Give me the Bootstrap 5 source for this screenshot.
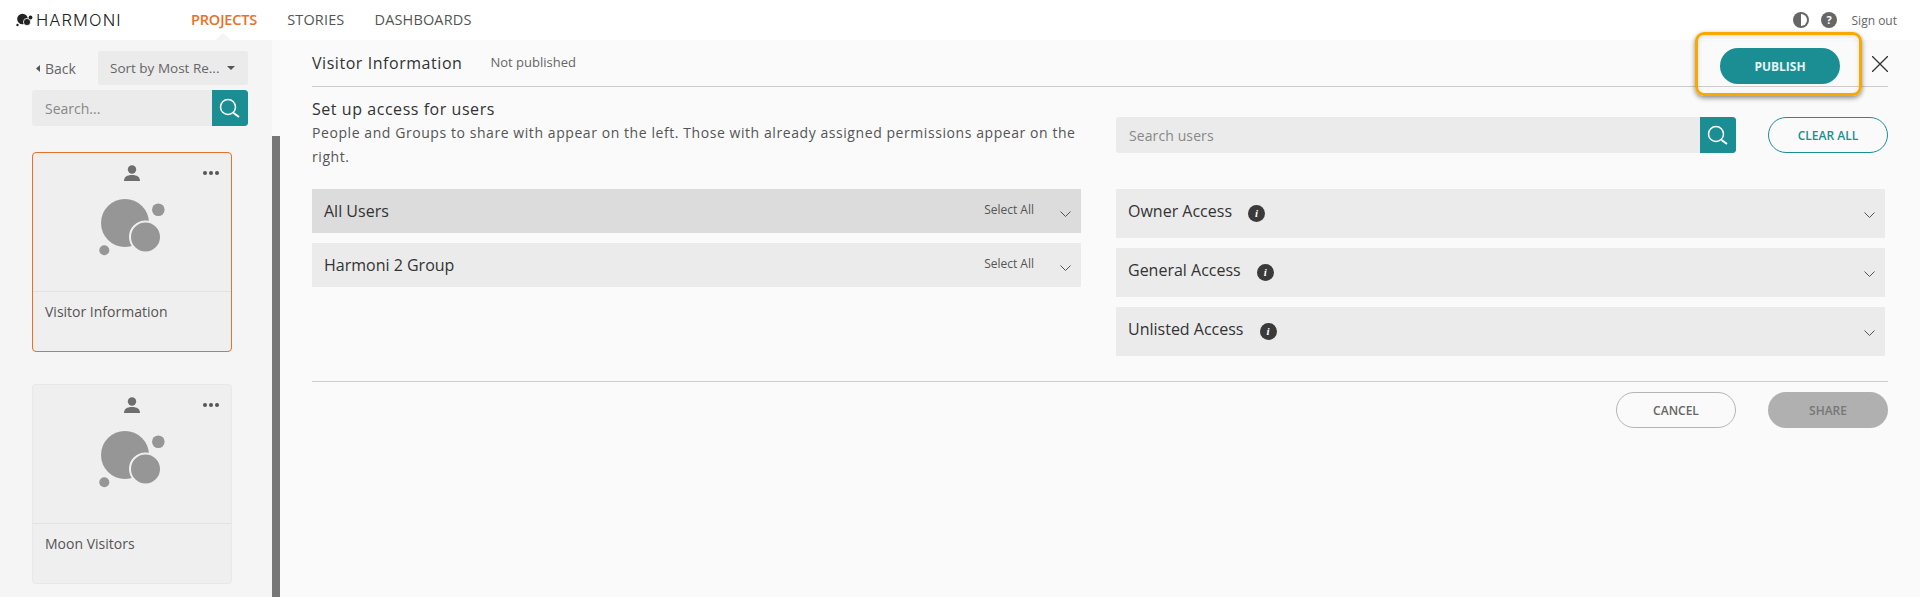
<!DOCTYPE html>
<html lang="en">
<head>
<meta charset="utf-8">
<title>Harmoni</title>
<link href="https://cdn.jsdelivr.net/npm/bootstrap@5.3.0/dist/css/bootstrap.min.css" rel="stylesheet">
<style>
html,body{height:597px;overflow:hidden}
body{font-family:"Open Sans",sans-serif;color:#333;background:#fafafa}
.hm-top{height:40px;background:#fff;position:relative}
.hm-logo{width:191px;padding-left:16px;gap:3px}
.hm-word{font-family:Inter,sans-serif;font-weight:300;font-size:16.5px;color:#222;letter-spacing:1.1px;line-height:20px}
.hm-link{font-size:14.5px;color:#555;font-weight:500;text-decoration:none;margin-right:30px;line-height:40px;letter-spacing:.15px}
.hm-link.on{color:#e8702a;font-weight:600;letter-spacing:-.15px}
.hm-notch{position:absolute;left:215px;top:33px;width:0;height:0;border-left:8px solid transparent;border-right:8px solid transparent;border-bottom:7px solid #f5f5f5}
.hm-util{padding-right:23px;gap:12px;color:#666;font-size:12px}
.hm-util span{margin-left:3px;padding-top:2px}
.hm-body{height:557px}
.hm-side{width:272px;background:#f5f5f5;position:relative;flex:none}
.hm-bar{width:8px;background:#777;margin-top:96px;flex:none}
.hm-sideinner{width:272px;padding:11px 24px 0 32px}
.hm-toprow{margin-bottom:5px}
.hm-back{width:66px;font-size:14px;color:#666;padding-left:4px;gap:5px;padding-top:1px}
.hm-sort{background:#ebebeb;height:34px;width:150px;border-radius:2px;font-size:13.5px;color:#666;padding:0 13px 0 12px;justify-content:space-between}
.hm-sort i{border-left:4px solid transparent;border-right:4px solid transparent;border-top:4px solid #555}
.hm-searchrow{height:36px;border-radius:3px;overflow:hidden;background:#ebebeb}
.hm-searchrow span{padding-left:13px;color:#888;font-size:14px;flex:1}
.hm-sbtn{width:36px;height:36px;background:#1b8e94;flex:none;border-radius:0 3px 3px 0}
.hm-tile{width:200px;height:200px;background:#efefef;border:1px solid #e8e8e8;border-radius:4px;position:relative;flex:none}
.hm-tile.sel{border-color:#e8702a;margin-top:26px;margin-bottom:32px}
.hm-tile-top{height:139px;border-bottom:1px solid #e2e2e2;position:relative}
.hm-tile-name{padding:9px 12px;font-size:14px;color:#555;font-weight:500}
.hm-user{position:absolute;left:91px;top:12px}
.hm-dots{position:absolute;left:170px;top:18px}
.hm-blob{position:absolute;left:66px;top:45px}
.hm-main{flex:1;padding:0 32px;position:relative;background:#fafafa}
.hm-head{height:47px;border-bottom:1px solid #ccc}
.hm-title{font-size:16px;font-weight:500;color:#333;letter-spacing:.55px;margin-right:28px}
.hm-state{font-size:13px;color:#666;font-weight:500}
.hm-pill{width:120px;height:36px;border-radius:18px;font-size:12px;font-weight:600;padding:1px 0 0;display:flex;align-items:center;justify-content:center}
.hm-pub{background:#1b8e94;color:#e3f4f4;font-weight:700;margin-right:32px;margin-top:6px;border:0}
.hm-x{flex:none;margin-top:2px}
.hm-ring{position:absolute;left:1415px;top:-8px;width:167px;height:64px;border:3px solid #f9a800;border-radius:9px;box-shadow:0 2px 5px rgba(0,0,0,.45),inset 0 2px 5px rgba(0,0,0,.12)}
.hm-grid{display:grid;grid-template-columns:769px 772px;column-gap:35px}
.hm-h2{font-size:16px;font-weight:500;color:#333;letter-spacing:.55px;line-height:22px;margin:0}
.hm-p{font-size:14px;color:#555;letter-spacing:.57px;line-height:24px;margin:1px 0 0}
.hm-intro{padding-top:11px;height:102px}
.hm-usrch{padding-top:30px;gap:32px}
.hm-ubox{width:620px;height:36px;background:#ebebeb;border-radius:3px;overflow:hidden}
.hm-ubox span{padding-left:13px;color:#888;font-size:14px;flex:1;letter-spacing:.1px}
.hm-clear{background:#fafafa;color:#1b8e94;border:1px solid #1b8e94}
.hm-row{background:#ebebeb;height:44px;margin-bottom:10px;padding:0 10px 0 12px;font-size:16px;color:#333;font-weight:500}
.hm-row.act{background:#dcdcdc}
.hm-row .t{flex:1}
.hm-row svg{margin-top:7px}
.hm-sel{font-size:12px;color:#555;margin-right:26px;margin-top:-2px;font-weight:500}
.hm-acc{background:#ebebeb;height:49px;margin-bottom:10px;margin-right:3px;padding:0 10px 0 12px;font-size:16px;color:#333;font-weight:500}
.hm-acc .t{margin-right:16px;margin-top:-5px}
.hm-acc svg{margin-top:3px}
.hm-info{width:17px;height:17px;border-radius:50%;background:#3a3a3a;color:#fff;font:italic 700 11px/17px "Liberation Serif",serif;text-align:center}
.hm-foot{border-top:1px solid #ccc;margin-top:15px;padding-top:10px;gap:32px}
.hm-cancel{background:#fafafa;color:#666;border:1px solid #b5b5b5}
.hm-share{background:#b0b0b0;color:#777;border:0}
</style>
</head>
<body>
<header class="hm-top d-flex align-items-center">
  <div class="hm-logo d-flex align-items-center">
    <svg width="17" height="14" viewBox="0 0 17 14"><circle cx="6.5" cy="6" r="5.3" fill="#222"/><circle cx="11" cy="9" r="3.6" fill="#222" stroke="#fff" stroke-width=".8"/><circle cx="14.5" cy="4.5" r="1.9" fill="#222"/><circle cx="1.5" cy="12" r="1.2" fill="#222"/></svg>
    <span class="hm-word">HARMONI</span>
  </div>
  <nav class="d-flex">
    <a class="hm-link on" href="#">PROJECTS</a>
    <a class="hm-link" href="#">STORIES</a>
    <a class="hm-link" href="#">DASHBOARDS</a>
  </nav>
  <div class="ms-auto hm-util d-flex align-items-center">
    <svg width="16" height="16" viewBox="0 0 16 16"><circle cx="8" cy="8" r="8" fill="#666"/><path d="M8 2a6 6 0 0 1 0 12z" fill="#fff"/></svg>
    <svg width="16" height="16" viewBox="0 0 16 16"><circle cx="8" cy="8" r="8" fill="#666"/><text x="8" y="12" text-anchor="middle" font-family="Open Sans" font-weight="700" font-size="11" fill="#fff">?</text></svg>
    <span>Sign out</span>
  </div>
  <div class="hm-notch"></div>
</header>
<div class="hm-body d-flex">
  <aside class="hm-side">
    <div class="hm-sideinner">
      <div class="hm-toprow d-flex align-items-center">
        <div class="hm-back d-flex align-items-center"><svg width="4" height="7" viewBox="0 0 4 7"><path d="M4 0v7L0 3.5z" fill="#555"/></svg>Back</div>
        <div class="hm-sort d-flex align-items-center"><span>Sort by Most Re...</span><i></i></div>
      </div>
      <div class="hm-searchrow d-flex align-items-center">
        <span>Search...</span>
        <div class="hm-sbtn d-flex align-items-center justify-content-center"><svg width="24" height="24" viewBox="0 0 24 24" fill="none" stroke="#fff"><circle cx="10" cy="11" r="7.5" stroke-width="1.5"/><path d="M15.5 17l5.5 4" stroke-width="2"/></svg></div>
      </div>
      <div class="hm-tile sel">
        <div class="hm-tile-top">
          <svg class="hm-user" width="16" height="16" viewBox="0 0 16 16"><circle cx="8" cy="4.5" r="4.2" fill="#6e6e6e"/><path d="M0 16c0-4 3-6 8-6s8 2 8 6z" fill="#6e6e6e"/></svg>
          <svg class="hm-dots" width="16" height="4" viewBox="0 0 16 4"><circle cx="2" cy="2" r="2" fill="#555"/><circle cx="8" cy="2" r="2" fill="#555"/><circle cx="14" cy="2" r="2" fill="#555"/></svg>
          <svg class="hm-blob" width="66" height="60" viewBox="0 0 66 60"><circle cx="26" cy="25" r="24" fill="#969696"/><circle cx="46.5" cy="39" r="15.5" fill="#969696" stroke="#efefef" stroke-width="2"/><circle cx="59.3" cy="11.7" r="6.3" fill="#969696"/><circle cx="5.3" cy="52.2" r="5" fill="#969696"/></svg>
        </div>
        <div class="hm-tile-name">Visitor Information</div>
      </div>
      <div class="hm-tile">
        <div class="hm-tile-top">
          <svg class="hm-user" width="16" height="16" viewBox="0 0 16 16"><circle cx="8" cy="4.5" r="4.2" fill="#6e6e6e"/><path d="M0 16c0-4 3-6 8-6s8 2 8 6z" fill="#6e6e6e"/></svg>
          <svg class="hm-dots" width="16" height="4" viewBox="0 0 16 4"><circle cx="2" cy="2" r="2" fill="#555"/><circle cx="8" cy="2" r="2" fill="#555"/><circle cx="14" cy="2" r="2" fill="#555"/></svg>
          <svg class="hm-blob" width="66" height="60" viewBox="0 0 66 60"><circle cx="26" cy="25" r="24" fill="#969696"/><circle cx="46.5" cy="39" r="15.5" fill="#969696" stroke="#efefef" stroke-width="2"/><circle cx="59.3" cy="11.7" r="6.3" fill="#969696"/><circle cx="5.3" cy="52.2" r="5" fill="#969696"/></svg>
        </div>
        <div class="hm-tile-name">Moon Visitors</div>
      </div>
    </div>
  </aside>
  <div class="hm-bar"></div>
  <main class="hm-main">
    <div class="hm-head d-flex align-items-center">
      <span class="hm-title">Visitor Information</span>
      <span class="hm-state">Not published</span>
      <button class="btn hm-pill hm-pub ms-auto">PUBLISH</button>
      <svg class="hm-x" width="16" height="16" viewBox="0 0 16 16" fill="none" stroke="#333" stroke-width="1.3"><path d="M0 0l16 16M16 0L0 16"/></svg>
    </div>
    <div class="hm-ring"></div>
    <div class="hm-grid">
      <div class="hm-intro">
        <h2 class="hm-h2">Set up access for users</h2>
        <p class="hm-p">People and Groups to share with appear on the left. Those with already assigned permissions appear on the right.</p>
      </div>
      <div class="hm-usrch d-flex align-items-start">
        <div class="hm-ubox d-flex align-items-center">
          <span>Search users</span>
          <div class="hm-sbtn d-flex align-items-center justify-content-center"><svg width="24" height="24" viewBox="0 0 24 24" fill="none" stroke="#fff"><circle cx="10" cy="11" r="7.5" stroke-width="1.5"/><path d="M15.5 17l5.5 4" stroke-width="2"/></svg></div>
        </div>
        <button class="btn hm-pill hm-clear">CLEAR ALL</button>
      </div>
      <div>
        <div class="hm-row act d-flex align-items-center"><span class="t">All Users</span><span class="hm-sel">Select All</span><svg width="11" height="7" viewBox="0 0 11 7" fill="none" stroke="#555"><path d="M.5 .5l5 5 5-5"/></svg></div>
        <div class="hm-row d-flex align-items-center"><span class="t">Harmoni 2 Group</span><span class="hm-sel">Select All</span><svg width="11" height="7" viewBox="0 0 11 7" fill="none" stroke="#555"><path d="M.5 .5l5 5 5-5"/></svg></div>
      </div>
      <div>
        <div class="hm-acc d-flex align-items-center"><span class="t">Owner Access</span><span class="hm-info">i</span><svg class="ms-auto" width="11" height="7" viewBox="0 0 11 7" fill="none" stroke="#555"><path d="M.5 .5l5 5 5-5"/></svg></div>
        <div class="hm-acc d-flex align-items-center"><span class="t">General Access</span><span class="hm-info">i</span><svg class="ms-auto" width="11" height="7" viewBox="0 0 11 7" fill="none" stroke="#555"><path d="M.5 .5l5 5 5-5"/></svg></div>
        <div class="hm-acc d-flex align-items-center"><span class="t">Unlisted Access</span><span class="hm-info">i</span><svg class="ms-auto" width="11" height="7" viewBox="0 0 11 7" fill="none" stroke="#555"><path d="M.5 .5l5 5 5-5"/></svg></div>
      </div>
    </div>
    <div class="hm-foot d-flex justify-content-end">
      <button class="btn hm-pill hm-cancel">CANCEL</button>
      <button class="btn hm-pill hm-share">SHARE</button>
    </div>
  </main>
</div>
<script src="https://cdn.jsdelivr.net/npm/bootstrap@5.3.0/dist/js/bootstrap.bundle.min.js"></script>
</body>
</html>
